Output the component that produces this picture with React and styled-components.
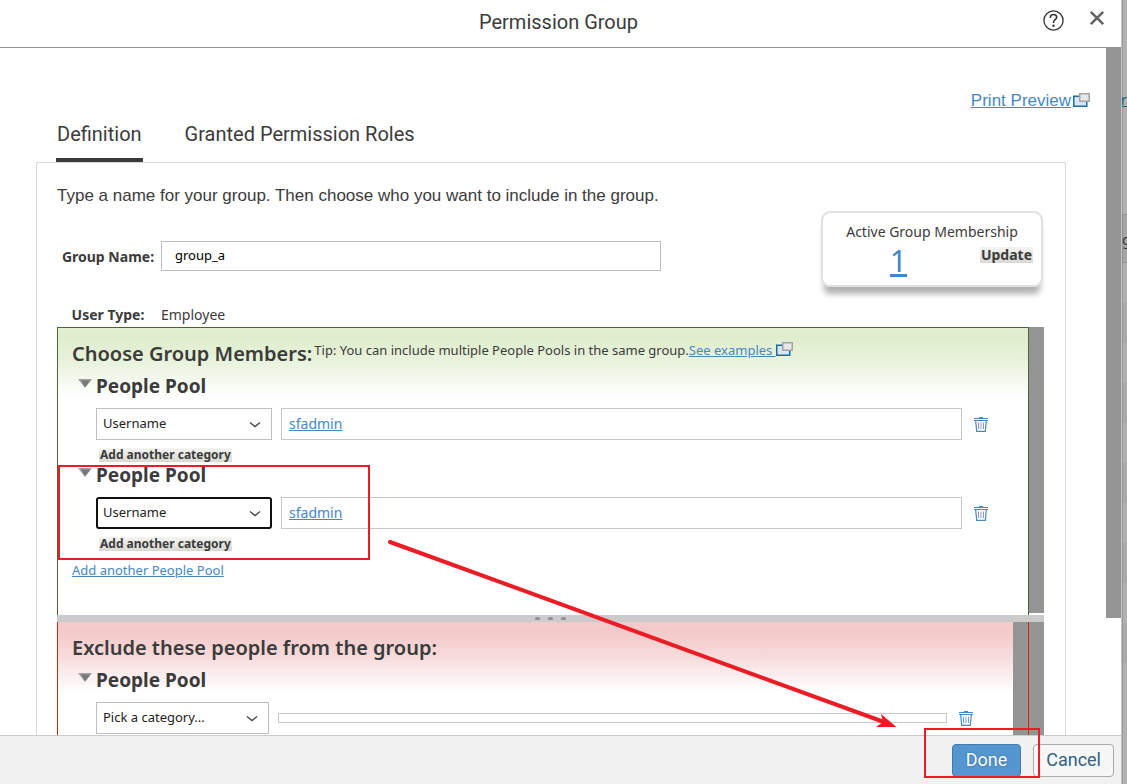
import React from 'react';
import styled, { createGlobalStyle, css } from 'styled-components';

const colours = {
  text: '#3b3b3b',
  link: '#4787c0',
  border: '#bfbfbf',
  scroll: '#949494',
  marker: '#ed1c24',
};

const fonts = {
  body: "'Noto Sans', 'Open Sans', sans-serif",
  heading: "Roboto, 'Liberation Sans', sans-serif",
  large: "'Liberation Sans', Arial, sans-serif",
};

const GlobalStyle = createGlobalStyle`
  * {
    box-sizing: border-box;
  }

  body {
    margin: 0;
    overflow: hidden;
    color: ${colours.text};
    font-family: ${fonts.body};
  }

  button, input, select {
    font-family: inherit;
  }
`;

const Screen = styled.div`
  position: relative;
  display: flex;
  height: 100vh;
  background: #fff;
`;

const Dialog = styled.div`
  flex: 1;
  min-width: 0;
  display: flex;
  flex-direction: column;
`;

const Header = styled.header`
  display: grid;
  grid-template-columns: 80px 1fr 80px;
  height: 48px;
  flex: none;
  padding-right: 4px;
  border-bottom: 1px solid ${colours.scroll};
`;

const Title = styled.h1`
  grid-column: 2;
  margin: 0;
  font-family: ${fonts.heading};
  font-size: 20px;
  font-weight: 400;
  line-height: 44px;
  text-align: center;
`;

const HeaderActions = styled.div`
  display: flex;
  align-items: flex-start;
  justify-content: flex-end;
  gap: 25px;
  padding: 10px 12px 0 0;
`;

const IconButton = styled.button`
  display: flex;
  flex: none;
  padding: 0;
  border: 0;
  background: none;
  cursor: pointer;
`;

const Body = styled.main`
  flex: 1;
  min-height: 0;
  display: flex;
  overflow: hidden;
`;

const Content = styled.div`
  flex: 1;
  min-width: 0;
  display: flex;
  flex-direction: column;
  padding: 42px 16px 0 36px;
`;

const Scrollbar = styled.div`
  flex: none;
  width: 15px;
  height: ${({ $height }) => $height || 'auto'};
  background: ${colours.scroll};
`;

const Link = styled.a`
  color: ${colours.link};
  font-size: ${({ $size }) => $size || 14}px;
  text-decoration: underline;
  white-space: pre;
`;

const PrintRow = styled.div`
  display: flex;
  align-items: center;
  justify-content: flex-end;
  gap: 2px;
  font-family: ${fonts.large};
  line-height: 22px;
`;

const Tabs = styled.div`
  display: flex;
  gap: 41px;
  padding-left: 20px;
  margin-top: 10px;
`;

const Tab = styled.button`
  height: 40px;
  padding: 0 1px 12px;
  border: 0;
  border-bottom: 4px solid ${({ $active }) => ($active ? colours.text : 'transparent')};
  background: none;
  color: ${colours.text};
  font-family: ${fonts.heading};
  font-size: 20px;
  line-height: 24px;
`;

const Panel = styled.section`
  flex: 1;
  min-height: 0;
  display: flex;
  flex-direction: column;
  margin-right: 24px;
  padding: 0 21px 0 20px;
  border: 1px solid #d9d9d9;
  border-bottom: 0;
`;

const Summary = styled.div`
  display: flex;
  justify-content: space-between;
  height: 164px;
  flex: none;
`;

const Form = styled.form`
  flex: 1;
`;

const Intro = styled.p`
  margin: 20px 0 32px;
  font-family: ${fonts.large};
  font-size: 17px;
  line-height: 26px;
`;

const Field = styled.div`
  display: grid;
  grid-template-columns: 104px 500px;
  align-items: center;
  margin-bottom: 34px;
  font-size: 14px;
`;

const FieldLabel = styled.label`
  padding-right: 2px;
  font-weight: 700;
  text-align: center;
`;

const TextInput = styled.input`
  height: 30px;
  padding: 0 13px 2px;
  border: 1px solid ${colours.border};
  color: #000;
  font-size: 13px;
`;

const Card = styled.aside`
  display: grid;
  grid-template-columns: 1fr auto;
  align-content: start;
  width: 222px;
  height: 76px;
  margin: 48px 1px 0 0;
  padding: 8px;
  border: 2px solid #e0e0e0;
  border-radius: 9px;
  box-shadow: 0 10px 6px -3px #b0b0b0;
  font-size: 14px;
`;

const CardTitle = styled.div`
  grid-column: 1 / 3;
  line-height: 22px;
  text-align: center;
`;

const Count = styled.div`
  padding-right: 14px;
  line-height: 36px;
  text-align: center;
`;

const SmallButton = styled.button`
  height: ${({ $height }) => $height}px;
  padding: 0 1px;
  border: 0;
  background: linear-gradient(#f4f4f2, #d9d9d2);
  color: ${colours.text};
  font-size: ${({ $size }) => $size}px;
  font-weight: 700;
  line-height: 14px;
  cursor: pointer;

  ${Card} & {
    margin-top: 4px;
  }
`;

const Include = styled.div`
  display: flex;
  align-items: flex-start;
  flex: none;
`;

const poolArea = css`
  flex: 1;
  min-width: 0;
  padding: 14px 0 0 14px;
`;

const IncludeArea = styled.div`
  ${poolArea}
  min-height: 288px;
  border: 1px solid #48682f;
  border-bottom: 0;
  background: linear-gradient(#e3efd3, #dfedcd 8px, #e8f2db 32px, #fff 70px);
`;

const Exclude = styled.div`
  flex: 1;
  display: flex;
  min-height: 0;
`;

const ExcludeFrame = styled.div`
  flex: 1;
  min-width: 0;
  display: flex;
  border: solid #d62400;
  border-width: 0 1px;
`;

const ExcludeArea = styled.div`
  ${poolArea}
  background: linear-gradient(#f5cbcb, #f3c8c8 8px, #f7d9d9 32px, #fff 70px);
`;

const Splitter = styled.div`
  display: flex;
  align-items: center;
  justify-content: center;
  gap: 8px;
  height: 7px;
  flex: none;
  background: #cbcbcb;
`;

const Dot = styled.span`
  width: 5px;
  height: 3px;
  border-radius: 2px 2px 0 0;
  background: #929292;
`;

const AreaHead = styled.div`
  display: flex;
  align-items: center;
  gap: 2px;
  height: 24px;
  margin-bottom: 9px;
  white-space: nowrap;
`;

const AreaTitle = styled.h2`
  margin: 0;
  font-size: 20px;
  font-weight: 600;
  line-height: 24px;
`;

const Tip = styled.span`
  display: flex;
  align-items: center;
  padding-bottom: 8px;
  font-size: 13px;
  line-height: 16px;
`;

const Pool = styled.div`
  display: flex;
  flex-direction: column;
  height: 89px;
  padding-left: 6px;
`;

const PoolHead = styled.h3`
  display: flex;
  align-items: center;
  gap: 4px;
  margin: 0 0 11px;
  font-size: 19px;
  font-weight: 700;
  line-height: 22px;
`;

const PoolRow = styled.div`
  display: flex;
  align-items: center;
  height: 32px;
  padding: 0 40px 0 18px;
  flex: none;
`;

const SelectBox = styled.div`
  display: grid;
  width: ${({ $width }) => $width}px;
  margin-right: 9px;
  flex: none;
  align-items: center;

  > * {
    grid-area: 1 / 1;
  }

  > svg {
    justify-self: end;
    margin-right: 11px;
    pointer-events: none;
  }
`;

const Select = styled.select`
  width: 100%;
  height: 32px;
  padding: ${({ $focused }) => ($focused ? '0 5px 2px' : '0 6px 2px')};
  border: ${({ $focused }) => ($focused ? '2px solid #111' : `1px solid ${colours.border}`)};
  border-radius: ${({ $focused }) => ($focused ? 3 : 0)}px;
  background: #fff;
  color: #222;
  font-size: 13px;
  appearance: none;
`;

const ValueBox = styled.div`
  flex: 1;
  height: ${({ $empty }) => ($empty ? 10 : 32)}px;
  margin-right: 12px;
  padding: 0 7px;
  border: 1px solid #c8c8c8;
  line-height: 28px;
`;

const CategoryAction = styled.div`
  display: flex;
  padding: 8px 0 0 21px;
`;

const AddPool = styled.div`
  margin-top: 7px;
  font-size: 13px;
  line-height: 20px;
`;

const Footer = styled.footer`
  display: flex;
  align-items: flex-start;
  justify-content: flex-end;
  gap: 12px;
  flex: none;
  height: 49px;
  padding: 8px 7px 0 0;
  border-top: 1px solid #cbcbcb;
  background: #f1f1f1;
`;

const FooterButton = styled.button`
  height: 33px;
  padding: ${({ $primary }) => ($primary ? '0 13px 2px' : '0 12px 2px')};
  border: 1px solid ${({ $primary }) => ($primary ? '#427cac' : '#aaa')};
  border-radius: 4px;
  background: ${({ $primary }) => ($primary ? '#5496cf' : '#f7f7f7')};
  color: ${({ $primary }) => ($primary ? '#fff' : '#346187')};
  font-family: ${fonts.heading};
  font-size: 18px;
  text-shadow: ${({ $primary }) => ($primary ? '0 0 2px #2f6594' : 'none')};
  cursor: pointer;
`;

const Backdrop = styled.div`
  display: flex;
  flex: none;
  flex-direction: column;
  width: 6px;
  overflow: hidden;
  border-left: 1px solid #c4c4c4;
  background: #b1b1b1;
  box-shadow: inset 1px 0 #9a9a9a;
  font-size: 15px;
  line-height: 20px;
  white-space: nowrap;
`;

const BackdropLink = styled.a`
  display: flex;
  justify-content: flex-end;
  height: 214px;
  padding-top: 89px;
  flex: none;
  color: #1f5f80;
`;

const BackdropHead = styled.div`
  height: 49px;
  padding-top: 14px;
  flex: none;
  border: solid #929292;
  border-width: 1px 0;
  background: #a5a5a5;
  box-shadow: inset 1px 0 #8e8e8e;
`;

const BackdropRows = styled.div`
  height: 400px;
  flex: none;
  background: repeating-linear-gradient(#b0b0b0 0 40px, #a9a9a9 40px 80px);
  box-shadow: inset 1px 0 #999;
`;

const Annotation = styled.svg`
  position: absolute;
  top: 0;
  left: 0;
  pointer-events: none;
`;

const HelpIcon = () => (
  <svg width="21" height="21" viewBox="0 0 21 21" fill="none" stroke="#333" strokeWidth="1.3">
    <circle cx="10.5" cy="10.5" r="9.6" />
    <path d="M7.4 8V7.3c0-1.7 1.3-2.8 3.1-2.8s3.2 1.1 3.2 2.7c0 2.4-3.2 2.6-3.2 5.2v.6" strokeWidth="1.6" />
    <circle cx="10.5" cy="15.7" r="1.2" fill="#333" stroke="none" />
  </svg>
);

const CloseIcon = () => (
  <svg width="16" height="16" viewBox="0 0 16 16" stroke="#666" strokeWidth="2.6">
    <path d="M1.8 1.8 14.2 14.2M14.2 1.8 1.8 14.2" />
  </svg>
);

const WindowsIcon = () => (
  <svg width="17" height="16" viewBox="0 0 17 16">
    <rect x="0.75" y="3.25" width="13" height="10" fill="#d9e6f2" stroke="#176fa6" strokeWidth="1.5" />
    <rect x="6.75" y="0.75" width="9.5" height="7.5" fill="#e8e8ea" stroke="#a3a3a3" strokeWidth="1.5" />
  </svg>
);

const TrashIcon = () => (
  <svg width="14" height="16" viewBox="0 0 14 16" fill="none" stroke={colours.link}>
    <path d="M0 2.5h14M0 4.5h14" />
    <path d="M5 1.5h4" />
    <path d="M1.7 5 2.7 15.4h8.6L12.3 5" strokeWidth="1.2" />
    <path d="M4.5 6.5V13M7 6.5V13M9.5 6.5V13" stroke="#8b93cf" />
  </svg>
);

const ChevronIcon = () => (
  <svg width="12" height="8" viewBox="0 0 12 8" fill="none" stroke="#444" strokeWidth="1.3">
    <path d="M1 2.4 6 6.6l5-4.2" />
  </svg>
);

const TriangleIcon = () => (
  <svg width="14" height="16" viewBox="0 0 14 16">
    <path d="M0 1h14L7 10z" fill="#a0a0a0" />
    <path d="M3 2.5h9.5L7 9z" fill="#787878" />
  </svg>
);

function PeoplePool({ name, category, value, focused, selectWidth = 176 }) {
  return (
    <Pool>
      <PoolHead>
        <TriangleIcon />
        People Pool
      </PoolHead>
      <PoolRow>
        <SelectBox $width={selectWidth}>
          <Select aria-label={`${name} category`} $focused={focused} defaultValue={category}>
            <option>{category}</option>
          </Select>
          <ChevronIcon />
        </SelectBox>
        <ValueBox $empty={!value}>{value && <Link href="#user">{value}</Link>}</ValueBox>
        <IconButton type="button" aria-label={`Delete ${name}`}>
          <TrashIcon />
        </IconButton>
      </PoolRow>
      {value && (
        <CategoryAction>
          <SmallButton type="button" $height={14} $size={12}>
            Add another category
          </SmallButton>
        </CategoryAction>
      )}
    </Pool>
  );
}

export default function App() {
  return (
    <Screen>
      <GlobalStyle />
      <Dialog role="dialog" aria-labelledby="dialog-title">
        <Header>
          <Title id="dialog-title">Permission Group</Title>
          <HeaderActions>
            <IconButton type="button" aria-label="Help">
              <HelpIcon />
            </IconButton>
            <IconButton type="button" aria-label="Close">
              <CloseIcon />
            </IconButton>
          </HeaderActions>
        </Header>
        <Body>
          <Content>
            <PrintRow>
              <Link href="#print" $size={17}>
                Print Preview
              </Link>
              <WindowsIcon />
            </PrintRow>
            <Tabs role="tablist">
              <Tab role="tab" aria-selected="true" $active>
                Definition
              </Tab>
              <Tab role="tab" aria-selected="false">
                Granted Permission Roles
              </Tab>
            </Tabs>
            <Panel>
              <Summary>
                <Form>
                  <Intro>Type a name for your group. Then choose who you want to include in the group.</Intro>
                  <Field>
                    <FieldLabel htmlFor="group-name">Group Name:</FieldLabel>
                    <TextInput id="group-name" defaultValue="group_a" />
                  </Field>
                  <Field>
                    <FieldLabel as="span">User Type:</FieldLabel>
                    <span>Employee</span>
                  </Field>
                </Form>
                <Card>
                  <CardTitle>Active Group Membership</CardTitle>
                  <Count>
                    <Link href="#members" $size={30}>
                      1
                    </Link>
                  </Count>
                  <SmallButton type="button" $height={16} $size={14}>
                    Update
                  </SmallButton>
                </Card>
              </Summary>
              <Include>
                <IncludeArea>
                  <AreaHead>
                    <AreaTitle>Choose Group Members:</AreaTitle>
                    <Tip>
                      Tip: You can include multiple People Pools in the same group.
                      <Link href="#examples" $size={13}>
                        {'See examples '}
                      </Link>
                      <WindowsIcon />
                    </Tip>
                  </AreaHead>
                  <PeoplePool name="First pool" category="Username" value="sfadmin" />
                  <PeoplePool name="Second pool" category="Username" value="sfadmin" focused />
                  <AddPool>
                    <Link href="#add-pool" $size={13}>
                      Add another People Pool
                    </Link>
                  </AddPool>
                </IncludeArea>
                <Scrollbar $height="286px" />
              </Include>
              <Splitter>
                <Dot />
                <Dot />
                <Dot />
              </Splitter>
              <Exclude>
                <ExcludeFrame>
                  <ExcludeArea>
                    <AreaHead>
                      <AreaTitle>Exclude these people from the group:</AreaTitle>
                    </AreaHead>
                    <PeoplePool name="Excluded pool" category="Pick a category..." selectWidth={173} />
                  </ExcludeArea>
                  <Scrollbar />
                </ExcludeFrame>
                <Scrollbar />
              </Exclude>
            </Panel>
          </Content>
          <Scrollbar $height="570px" />
        </Body>
        <Footer>
          <FooterButton type="button" $primary>
            Done
          </FooterButton>
          <FooterButton type="button">Cancel</FooterButton>
        </Footer>
      </Dialog>
      <Backdrop>
        <BackdropLink href="#user">er</BackdropLink>
        <BackdropHead>g</BackdropHead>
        <BackdropRows />
      </Backdrop>
      <Annotation width="1127" height="784" fill="none" stroke={colours.marker}>
        <rect x="59" y="466" width="310" height="93" strokeWidth="2" />
        <rect x="925" y="729" width="114" height="48" strokeWidth="2" />
        <path d="M390 542 884 722" strokeWidth="4" strokeLinecap="round" />
        <path d="M896.5 727 881 714 883 722 876 727z" fill={colours.marker} stroke="none" />
      </Annotation>
    </Screen>
  );
}
